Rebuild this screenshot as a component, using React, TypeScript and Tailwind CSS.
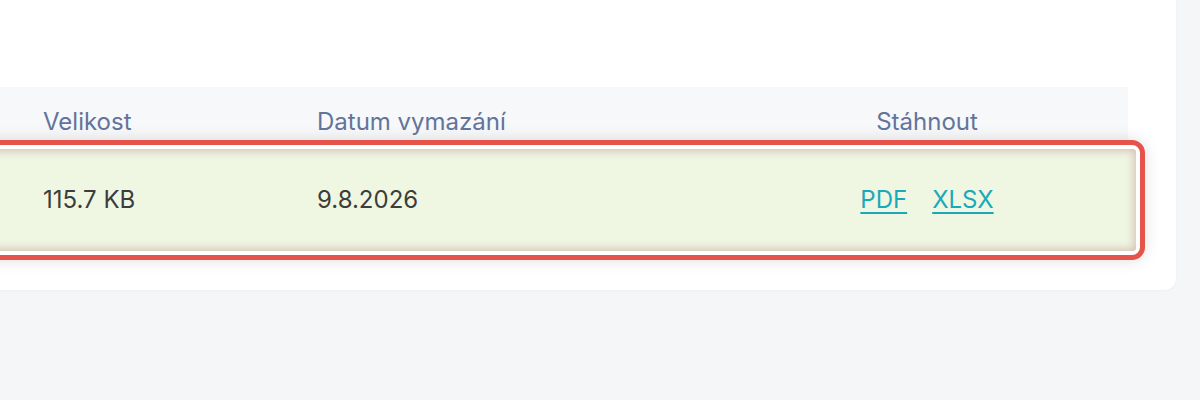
export default function App() {
  const font = { fontFamily: "Inter, 'Noto Sans', sans-serif" };
  return (
    <div className="w-[1200px] h-[400px] overflow-hidden bg-[#f5f6f8]" style={font}>
      <div className="-ml-[60px] w-[1236px] h-[290px] bg-white rounded-br-[12px] pt-[87px] shadow-[0_1px_3px_rgba(0,0,0,0.03)]">
        <div className="w-[1188px] h-[53px] bg-[#f6f8fa] flex items-center text-[24px] leading-none text-[#63739a] pt-[17px]">
          <div className="w-[103px]" />
          <div className="w-[274px]">Velikost</div>
          <div className="w-[500px]">Datum vymazání</div>
          <div className="w-[220px] text-center">Stáhnout</div>
        </div>
        <div className="w-[1205px] border-[5px] border-[#e5534b] rounded-[13px] p-[4px] bg-white shadow-[0_0_16px_rgba(0,0,0,0.13)]">
          <div className="h-[102px] bg-[#eff7e3] rounded-[3px] flex items-center text-[24px] leading-none text-[#3b3e3a] shadow-[inset_0_0_8px_2px_rgba(190,140,140,0.5)]">
            <div className="w-[94px]" />
            <div className="w-[274px]">115.7 KB</div>
            <div className="w-[500px]">9.8.2026</div>
            <div className="w-[220px] flex justify-center gap-[25px] text-[#1aa9b9]">
              <a href="#" className="underline underline-offset-[4px] decoration-[1.5px]">PDF</a>
              <a href="#" className="underline underline-offset-[4px] decoration-[1.5px]">XLSX</a>
            </div>
          </div>
        </div>
      </div>
    </div>
  );
}
